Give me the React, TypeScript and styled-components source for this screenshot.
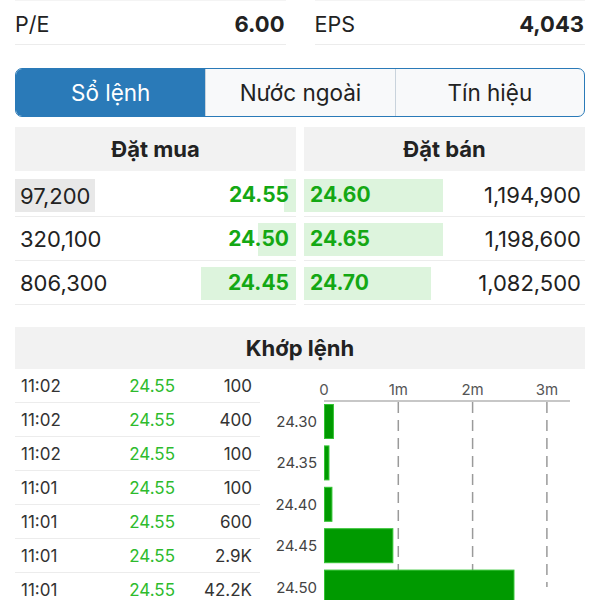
import React from "react";
import styled, { createGlobalStyle } from "styled-components";

const colors = {
  text: "#222222",
  muted: "#555555",
  blue: "#2a7ab8",
  green: "#14a814",
  greenLight: "#2dbb2d",
  greenBg: "#ddf4dd",
  headerBg: "#f2f2f2",
  line: "#ececec",
  barFill: "#009a00",
  barStroke: "#33c433",
};

const GlobalStyle = createGlobalStyle`
  body {
    margin: 0;
    background: #ffffff;
    font-family: Inter, "Liberation Sans", sans-serif;
    color: ${colors.text};
  }
`;

const Page = styled.div`
  width: 600px;
  height: 600px;
  overflow: hidden;
  padding: 0 15px;
  box-sizing: border-box;
`;

const StatsGrid = styled.div`
  display: grid;
  grid-template-columns: 1fr 1fr;
  column-gap: 29px;
`;

const StatItem = styled.div`
  display: flex;
  align-items: center;
  justify-content: space-between;
  height: 45px;
  padding: 3px 1px 0 0;
  border-top: 1px solid #f4f4f4;
  border-bottom: 1px solid ${colors.line};
  box-sizing: border-box;
  font-size: 21.5px;
`;

const StatValue = styled.span`
  font-weight: 700;
  font-size: 22px;
`;

const Tabs = styled.div`
  display: grid;
  grid-template-columns: repeat(3, 1fr);
  margin-top: 23px;
  height: 49px;
  border: 1.5px solid ${colors.blue};
  border-radius: 7px;
  overflow: hidden;
  box-sizing: border-box;
  background: #f8f9fa;
`;

const Tab = styled.div<{ $active?: boolean }>`
  display: flex;
  align-items: center;
  justify-content: center;
  font-size: 22.5px;
  background: ${(p) => (p.$active ? colors.blue : "transparent")};
  color: ${(p) => (p.$active ? "#ffffff" : colors.text)};
  & + & {
    border-left: 1px solid ${(p) => (p.$active ? colors.blue : "#c9d3dc")};
  }
`;

const Book = styled.div`
  display: grid;
  grid-template-columns: 1fr 1fr;
  column-gap: 8px;
  margin-top: 10px;
`;

const SectionHeader = styled.div<{ $h?: number }>`
  display: flex;
  align-items: center;
  justify-content: center;
  height: ${(p) => p.$h ?? 44}px;
  background: ${colors.headerBg};
  font-size: 22px;
  font-weight: 700;
`;

const BookHeader = styled(SectionHeader)`
  margin-bottom: 2px;
`;

const BookRow = styled.div<{ $side: "buy" | "sell" }>`
  position: relative;
  display: flex;
  align-items: center;
  justify-content: space-between;
  height: 44px;
  border-bottom: 1px solid ${colors.line};
  box-sizing: border-box;
  padding: ${(p) => (p.$side === "buy" ? "0 7px 0 5px" : "0 4px 0 6px")};
  font-size: 22px;
`;

const DepthBar = styled.div<{ $side: "buy" | "sell" }>`
  position: absolute;
  top: 6px;
  bottom: 4px;
  ${(p) => (p.$side === "buy" ? "right: 0;" : "left: 0;")}
  background: ${colors.greenBg};
`;

const Qty = styled.span<{ $flash?: boolean }>`
  position: relative;
  display: flex;
  align-items: center;
  align-self: stretch;
  margin: ${(p) => (p.$flash ? "6px 0 4px -5px" : "0")};
  padding: ${(p) => (p.$flash ? "0 5px" : "0")};
  background: ${(p) => (p.$flash ? "#e8e8e8" : "transparent")};
`;

const Price = styled.span`
  position: relative;
  color: ${colors.green};
  font-weight: 700;
  font-size: 21px;
`;

const MatchSection = styled.div`
  margin-top: 22px;
`;

const MatchBody = styled.div`
  display: flex;
`;

const TradeList = styled.div`
  width: 245px;
  flex-shrink: 0;
`;

const TradeRow = styled.div`
  display: grid;
  grid-template-columns: 74px 80px 1fr;
  align-items: center;
  height: 34px;
  padding: 0 8px 0 6px;
  border-bottom: 1px solid ${colors.line};
  box-sizing: border-box;
  font-size: 17px;
  color: #333333;
`;

const TradePrice = styled.span`
  text-align: right;
  color: ${colors.greenLight};
`;

const TradeVol = styled.span`
  text-align: right;
`;

const Chart = styled.svg`
  display: block;
  flex-shrink: 0;
  font-family: Inter, "Liberation Sans", sans-serif;
`;

const stats = [
  { label: "P/E", value: "6.00" },
  { label: "EPS", value: "4,043" },
];

const buys = [
  { qty: "97,200", price: "24.55", bar: 12, flash: true },
  { qty: "320,100", price: "24.50", bar: 38 },
  { qty: "806,300", price: "24.45", bar: 95 },
];

const sells = [
  { qty: "1,194,900", price: "24.60", bar: 139 },
  { qty: "1,198,600", price: "24.65", bar: 139 },
  { qty: "1,082,500", price: "24.70", bar: 127 },
];

const trades = [
  ["11:02", "24.55", "100"],
  ["11:02", "24.55", "400"],
  ["11:02", "24.55", "100"],
  ["11:01", "24.55", "100"],
  ["11:01", "24.55", "600"],
  ["11:01", "24.55", "2.9K"],
  ["11:01", "24.55", "42.2K"],
];

const volumes = [
  { price: "24.30", value: 0.12 },
  { price: "24.35", value: 0.06 },
  { price: "24.40", value: 0.1 },
  { price: "24.45", value: 0.92 },
  { price: "24.50", value: 2.55 },
];

// chart geometry, px inside the svg
const X0 = 64;
const PER_M = 74.3;
const AXIS_Y = 32;
const ROW_H = 41.4;

function VolumeChart() {
  return (
    <Chart width={325} height={240} viewBox="0 0 325 240">
      {[0, 1, 2, 3].map((m) => (
        <text key={m} x={X0 + m * PER_M} y={AXIS_Y - 10} fontSize={15} fill={colors.muted} textAnchor="middle" dominantBaseline="middle">
          {m === 0 ? "0" : `${m}m`}
        </text>
      ))}
      {[1, 2, 3].map((m) => (
        <line key={m} x1={X0 + m * PER_M} x2={X0 + m * PER_M} y1={AXIS_Y + 1} y2={218} stroke="#9a9a9a" strokeWidth={1.5} strokeDasharray="11 7" />
      ))}
      <line x1={X0} x2={310} y1={AXIS_Y} y2={AXIS_Y} stroke="#b5b5b5" strokeWidth={1.5} />
      {volumes.map((v, i) => {
        const y = AXIS_Y + 3 + i * ROW_H;
        return (
          <g key={v.price}>
            <text x={57} y={y + 19} fontSize={15} fill="#444444" textAnchor="end" dominantBaseline="middle">
              {v.price}
            </text>
            <rect x={X0 + 0.5} y={y + 0.5} width={v.value * PER_M} height={34} fill={colors.barFill} stroke={colors.barStroke} strokeWidth={1} />
          </g>
        );
      })}
    </Chart>
  );
}

export default function App() {
  return (
    <Page>
      <GlobalStyle />
      <StatsGrid>
        {stats.map((s) => (
          <StatItem key={s.label}>
            <span>{s.label}</span>
            <StatValue>{s.value}</StatValue>
          </StatItem>
        ))}
      </StatsGrid>

      <Tabs>
        <Tab $active>Sổ lệnh</Tab>
        <Tab>Nước ngoài</Tab>
        <Tab>Tín hiệu</Tab>
      </Tabs>

      <Book>
        <div>
          <BookHeader>Đặt mua</BookHeader>
          {buys.map((r) => (
            <BookRow $side="buy" key={r.price}>
              <DepthBar $side="buy" style={{ width: r.bar }} />
              <Qty $flash={r.flash}>{r.qty}</Qty>
              <Price>{r.price}</Price>
            </BookRow>
          ))}
        </div>
        <div>
          <BookHeader>Đặt bán</BookHeader>
          {sells.map((r) => (
            <BookRow $side="sell" key={r.price}>
              <DepthBar $side="sell" style={{ width: r.bar }} />
              <Price>{r.price}</Price>
              <Qty>{r.qty}</Qty>
            </BookRow>
          ))}
        </div>
      </Book>

      <MatchSection>
        <SectionHeader $h={42}>Khớp lệnh</SectionHeader>
        <MatchBody>
          <TradeList>
            {trades.map(([time, price, vol], i) => (
              <TradeRow key={i}>
                <span>{time}</span>
                <TradePrice>{price}</TradePrice>
                <TradeVol>{vol}</TradeVol>
              </TradeRow>
            ))}
          </TradeList>
          <VolumeChart />
        </MatchBody>
      </MatchSection>
    </Page>
  );
}
